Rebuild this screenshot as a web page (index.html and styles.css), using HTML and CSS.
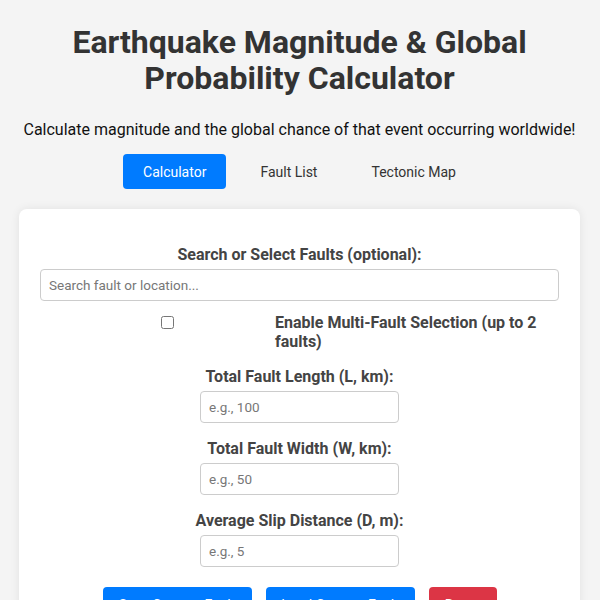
FILE: index.html
```html
<!DOCTYPE html>
<html lang="en">
<head>
<meta charset="utf-8">
<title>Earthquake Magnitude &amp; Global Probability Calculator</title>
<link rel="stylesheet" href="styles.css">
</head>
<body>
  <header class="page-header">
    <h1 class="title">Earthquake Magnitude &amp; Global Probability Calculator</h1>
    <p class="subtitle">Calculate magnitude and the global chance of that event occurring worldwide!</p>
    <nav class="tabs">
      <button class="tab active" type="button">Calculator</button>
      <button class="tab" type="button">Fault List</button>
      <button class="tab" type="button">Tectonic Map</button>
    </nav>
  </header>

  <main class="card">
    <div class="field field-search">
      <label class="field-label" for="fault-search">Search or Select Faults (optional):</label>
      <input class="text-input wide" id="fault-search" type="text" placeholder="Search fault or location...">
    </div>

    <div class="check-row">
      <input class="check" id="multi-fault" type="checkbox">
      <label class="check-label" for="multi-fault">Enable Multi-Fault Selection (up to 2 faults)</label>
    </div>

    <div class="field">
      <label class="field-label" for="length">Total Fault Length (L, km):</label>
      <input class="text-input narrow" id="length" type="number" placeholder="e.g., 100">
    </div>

    <div class="field">
      <label class="field-label" for="width">Total Fault Width (W, km):</label>
      <input class="text-input narrow" id="width" type="number" placeholder="e.g., 50">
    </div>

    <div class="field">
      <label class="field-label" for="slip">Average Slip Distance (D, m):</label>
      <input class="text-input narrow" id="slip" type="number" placeholder="e.g., 5">
    </div>

    <div class="actions">
      <button class="btn btn-blue" type="button">Save Custom Fault</button>
      <button class="btn btn-blue" type="button">Load Custom Fault</button>
      <button class="btn btn-red" type="button">Reset</button>
    </div>
  </main>
</body>
</html>
```

FILE: styles.css
```css
html, body {
  margin: 0;
  padding: 0;
}

body {
  background: #f4f4f4;
  font-family: Roboto, "Liberation Sans", Arial, sans-serif;
  color: #222;
  padding: 0 20px 40px 19px;
}

.page-header {
  text-align: center;
  padding-top: 24px;
}

.title {
  margin: 0 auto;
  max-width: 470px;
  font-size: 32px;
  line-height: 36px;
  font-weight: 700;
  color: #333;
}

.subtitle {
  margin: 24px 0 0;
  font-size: 16px;
  line-height: 20px;
  color: #111;
}

.tabs {
  display: flex;
  justify-content: center;
  gap: 14px;
  margin-top: 14px;
}

.tab {
  font-family: inherit;
  font-size: 14px;
  padding: 0 20px;
  height: 35px;
  border: none;
  border-radius: 4px;
  background: transparent;
  color: #333;
}

.tab.active {
  background: #007bff;
  color: #fff;
}

.card {
  margin-top: 20px;
  background: #fff;
  border-radius: 8px;
  box-shadow: 0 0 10px rgba(0, 0, 0, 0.08);
  padding: 36px 21px 20px;
  text-align: center;
}

.field {
  margin-bottom: 16px;
}

.field-search {
  margin-bottom: 12px;
}

.field-label {
  display: block;
  font-size: 16px;
  line-height: 19px;
  font-weight: 700;
  color: #444;
  margin-bottom: 5px;
}

.text-input {
  box-sizing: border-box;
  height: 32px;
  padding: 0 8px;
  border: 1px solid #ccc;
  border-radius: 4px;
  font-family: inherit;
  font-size: 13.5px;
  color: #333;
  background: #fff;
}

.text-input::placeholder {
  color: #777;
}

.text-input.wide {
  display: block;
  width: 100%;
}

.text-input.narrow {
  width: 199px;
}

.check-row {
  display: flex;
  align-items: flex-start;
  text-align: left;
  margin-bottom: 16px;
}

.check {
  flex: none;
  width: 13px;
  height: 13px;
  margin: 3px 101px 0 121px;
}

.check-label {
  font-size: 16px;
  line-height: 19px;
  font-weight: 700;
  color: #444;
  max-width: 270px;
}

.actions {
  display: flex;
  justify-content: center;
  gap: 14px;
  margin-top: 20px;
}

.btn {
  font-family: inherit;
  font-size: 14px;
  height: 36px;
  padding: 0 15px;
  border: none;
  border-radius: 4px;
  color: #fff;
}

.btn-blue {
  background: #007bff;
  min-width: 149px;
}

.btn-red {
  background: #dc3545;
  min-width: 68px;
}
```
